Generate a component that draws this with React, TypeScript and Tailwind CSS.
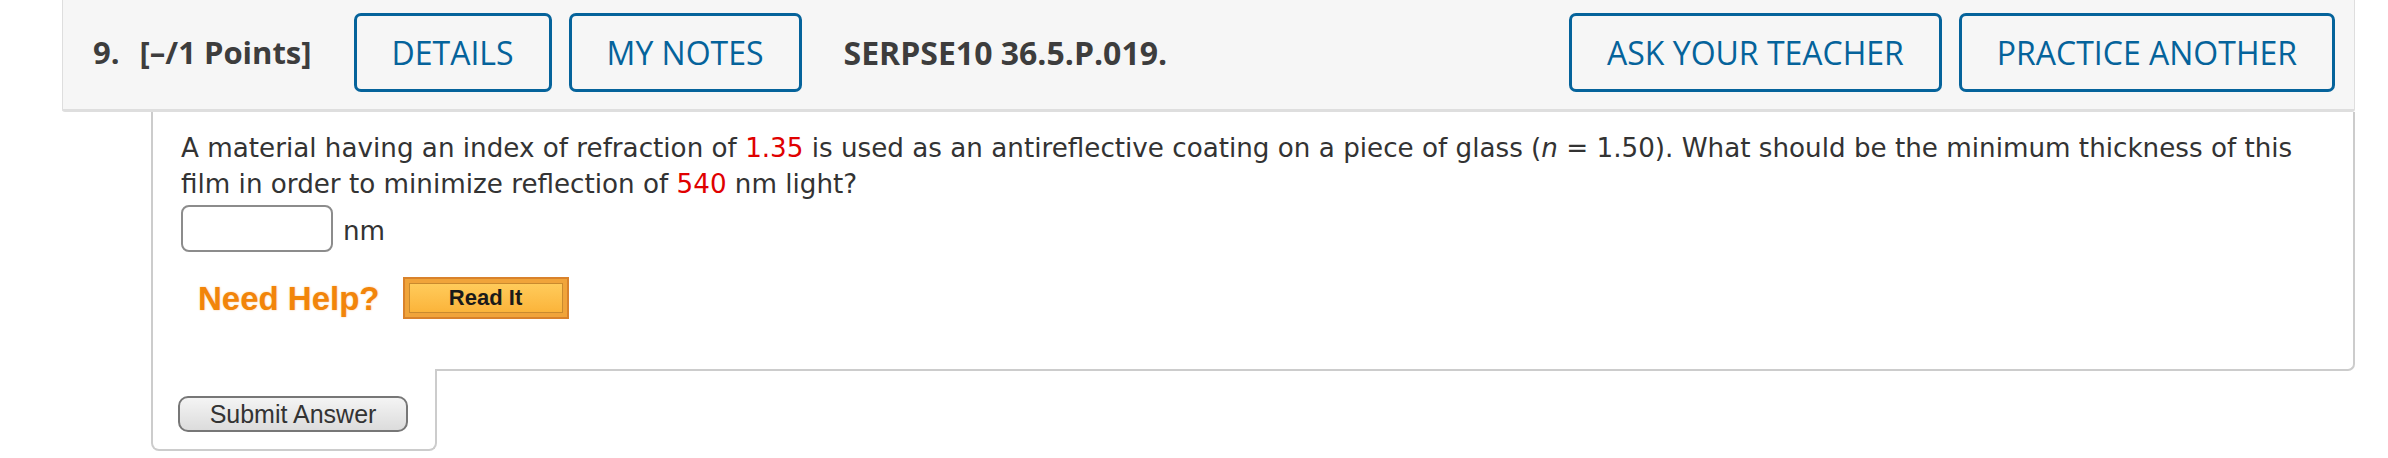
import React from 'react';

const HEADER_BUTTONS_LEFT = ['DETAILS', 'MY NOTES'];
const HEADER_BUTTONS_RIGHT = ['ASK YOUR TEACHER', 'PRACTICE ANOTHER'];

function HeaderButton({ label }: { label: string }) {
  return (
    <button className="h-[79px] px-[35px] border-[3px] border-[#05639b] rounded-[7px] text-[#05639b] text-[32px] leading-none bg-transparent">
      {label}
    </button>
  );
}

export default function App() {
  return (
    <div className="w-[2388px] h-[458px] bg-white overflow-hidden">
      <div className="ml-[62px] w-[2293px]">
        {/* question header */}
        <div
          className="h-[112px] bg-[#f6f6f6] border-x border-b-[3px] border-[#dedede] rounded-b-[3px] flex items-start pt-[13px] pl-[30px] pr-[19px]"
          style={{ fontFamily: '"Open Sans", sans-serif' }}
        >
          <div className="flex items-center gap-[42px] h-[79px]">
            <div className="flex items-center gap-[20px] text-[31px] font-bold text-[#3d3d3d]">
              <span>9.</span>
              <span>[–/1 Points]</span>
            </div>
            <div className="flex gap-[17px]">
              {HEADER_BUTTONS_LEFT.map(b => (
                <HeaderButton key={b} label={b} />
              ))}
            </div>
            <span className="text-[32px] font-bold text-[#3d3d3d]">SERPSE10 36.5.P.019.</span>
          </div>
          <div className="ml-auto flex gap-[17px]">
            {HEADER_BUTTONS_RIGHT.map(b => (
              <HeaderButton key={b} label={b} />
            ))}
          </div>
        </div>

        {/* question body */}
        <div className="ml-[89px]">
          <div
            className="border-x-2 border-b-2 border-[#cccccc] rounded-br-[7px] pl-[28px] pr-[30px] pt-[18px] pb-[50px] text-[#333] text-[26.2px] leading-[36px]"
            style={{ fontFamily: '"DejaVu Sans", Verdana, sans-serif' }}
          >
            <p>
              A material having an index of refraction of <span className="text-[#e00000]">1.35</span> is used as an
              antireflective coating on a piece of glass (<i>n</i> = 1.50). What should be the minimum thickness of
              this film in order to minimize reflection of <span className="text-[#e00000]">540</span> nm light?
            </p>
            <div className="flex items-center gap-[10px] mt-[3px]">
              <input
                type="text"
                className="w-[152px] h-[47px] border-2 border-[#8c8c8c] rounded-[8px] bg-white outline-none"
              />
              <span className="pt-[4px]">nm</span>
            </div>
            <div
              className="flex items-center gap-[23px] mt-[25px] pl-[17px]"
              style={{ fontFamily: '"Liberation Sans", Arial, sans-serif' }}
            >
              <span className="text-[33px] font-bold text-[#f2850a] leading-none [text-shadow:0_0_2px_rgba(242,133,10,0.45)]">
                Need Help?
              </span>
              <button className="w-[166px] h-[42px] bg-[#f0a43a] border-2 border-[#d9822b] p-[4px]">
                <div className="h-full border border-[#c98a2e] bg-gradient-to-b from-[#ffcb5a] to-[#fbb43a] flex items-center justify-center text-[22px] font-bold text-[#1a1a1a] leading-none">
                  Read It
                </div>
              </button>
            </div>
          </div>
          <div className="-mt-[2px] w-[286px] h-[82px] bg-white border-x-2 border-b-2 border-[#cccccc] rounded-b-[8px] pl-[25px] pt-[27px]">
            <button
              className="w-[230px] h-[36px] rounded-[10px] border-2 border-[#777] bg-gradient-to-b from-[#f4f4f4] to-[#dcdcdc] text-[25px] text-[#333] leading-none"
              style={{ fontFamily: '"Liberation Sans", Arial, sans-serif' }}
            >
              Submit Answer
            </button>
          </div>
        </div>
      </div>
    </div>
  );
}
